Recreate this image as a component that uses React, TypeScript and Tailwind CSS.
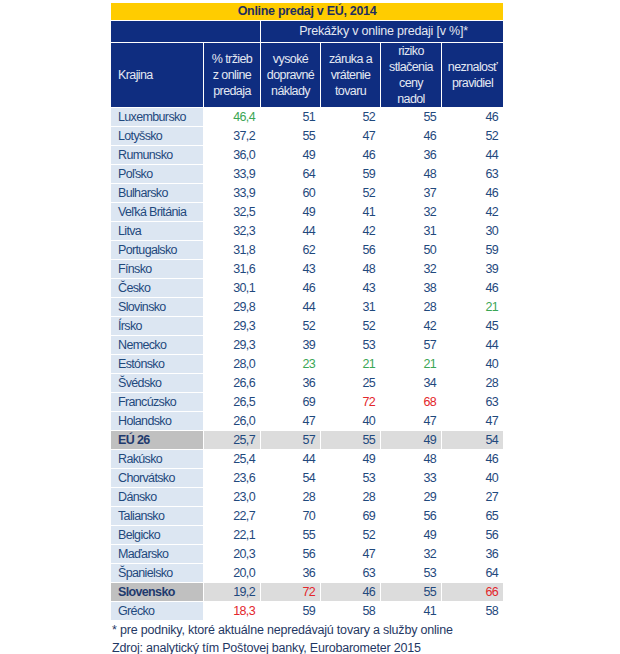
const rows: [string, string, string, string, string, string, string?][] = [
  ["Luxembursko", "46,4", "51", "52", "55", "46", "g....."],
  ["Lotyšsko", "37,2", "55", "47", "46", "52"],
  ["Rumunsko", "36,0", "49", "46", "36", "44"],
  ["Poľsko", "33,9", "64", "59", "48", "63"],
  ["Bulharsko", "33,9", "60", "52", "37", "46"],
  ["Veľká Británia", "32,5", "49", "41", "32", "42"],
  ["Litva", "32,3", "44", "42", "31", "30"],
  ["Portugalsko", "31,8", "62", "56", "50", "59"],
  ["Fínsko", "31,6", "43", "48", "32", "39"],
  ["Česko", "30,1", "46", "43", "38", "46"],
  ["Slovinsko", "29,8", "44", "31", "28", "21", "....g"],
  ["Írsko", "29,3", "52", "52", "42", "45"],
  ["Nemecko", "29,3", "39", "53", "57", "44"],
  ["Estónsko", "28,0", "23", "21", "21", "40", ".ggg."],
  ["Švédsko", "26,6", "36", "25", "34", "28"],
  ["Francúzsko", "26,5", "69", "72", "68", "63", "..rr."],
  ["Holandsko", "26,0", "47", "40", "47", "47"],
  ["EÚ 26", "25,7", "57", "55", "49", "54", "....."],
  ["Rakúsko", "25,4", "44", "49", "48", "46"],
  ["Chorvátsko", "23,6", "54", "53", "33", "40"],
  ["Dánsko", "23,0", "28", "28", "29", "27"],
  ["Taliansko", "22,7", "70", "69", "56", "65"],
  ["Belgicko", "22,1", "55", "52", "49", "56"],
  ["Maďarsko", "20,3", "56", "47", "32", "36"],
  ["Španielsko", "20,0", "36", "63", "53", "64"],
  ["Slovensko", "19,2", "72", "46", "55", "66", ".r..r"],
  ["Grécko", "18,3", "59", "58", "41", "58", "r...."],
];

const highlighted = ["EÚ 26", "Slovensko"];

function tone(flag: string | undefined, i: number) {
  const c = flag?.[i];
  if (c === "g") return "text-[#3aa655]";
  if (c === "r") return "text-[#e3262b]";
  return "text-[#1f497d]";
}

export default function App() {
  return (
    <div className="min-h-[654px] w-[620px] bg-white pl-[110px] pt-[2px] font-['Liberation_Sans',Arial,sans-serif] text-[12.5px] tracking-[-0.65px]">
      <table className="w-[393px] table-fixed border-collapse">
        <colgroup>
          <col className="w-[93px]" />
          <col className="w-[57px]" />
          <col className="w-[60px]" />
          <col className="w-[60px]" />
          <col className="w-[61px]" />
          <col className="w-[62px]" />
        </colgroup>
        <thead>
          <tr>
            <th
              colSpan={6}
              className="h-[18px] border border-white bg-[#ffcc00] p-0 text-center text-[12.5px] font-bold leading-none tracking-[-0.3px] text-[#1f2f5f]"
            >
              Online predaj v EÚ, 2014
            </th>
          </tr>
          <tr className="bg-[#0f2d80] text-[#e4e8f2]">
            <th colSpan={2} className="h-[22px] border border-white p-0" />
            <th
              colSpan={4}
              className="h-[22px] border border-white p-0 pl-[3px] text-center text-[12.5px] font-normal tracking-[-0.2px]"
            >
              Prekážky v online predaji [v %]*
            </th>
          </tr>
          <tr className="bg-[#0f2d80] text-[12.5px] leading-[16px] tracking-[-0.6px] text-[#e4e8f2]">
            <th className="h-[65px] border border-white pl-[7px] text-left font-normal">Krajina</th>
            <th className="border border-white p-0 text-center font-normal">
              % tržieb
              <br />z online
              <br />predaja
            </th>
            <th className="border border-white p-0 text-center font-normal">
              vysoké
              <br />dopravné
              <br />náklady
            </th>
            <th className="border border-white p-0 text-center font-normal">
              záruka a
              <br />vrátenie
              <br />tovaru
            </th>
            <th className="border border-white p-0 text-center font-normal">
              riziko
              <br />stlačenia
              <br />ceny
              <br />nadol
            </th>
            <th className="border border-white p-0 text-center font-normal">
              neznalosť
              <br />pravidiel
            </th>
          </tr>
        </thead>
        <tbody className="leading-none">
          {rows.map((r) => {
            const hi = highlighted.includes(r[0]);
            return (
              <tr key={r[0]} className="h-[19px]">
                <td
                  className={`border border-white pl-[7px] ${
                    hi ? "bg-[#c0c0c0] font-bold text-[#1f3a6e]" : "bg-[#dce6f2] text-[#1f497d]"
                  }`}
                >
                  {r[0]}
                </td>
                {[1, 2, 3, 4, 5].map((i) => (
                  <td
                    key={i}
                    className={`border border-white pr-[5px] text-right ${hi ? "bg-[#dcdcdc]" : "bg-white"} ${tone(r[6], i - 1)}`}
                  >
                    {r[i]}
                  </td>
                ))}
              </tr>
            );
          })}
        </tbody>
      </table>
      <div className="pl-[2px] text-[12.5px] leading-[18px] tracking-[-0.2px] text-[#1f3864]">
        <p>* pre podniky, ktoré aktuálne nepredávajú tovary a služby online</p>
        <p>Zdroj: analytický tím Poštovej banky, Eurobarometer 2015</p>
      </div>
    </div>
  );
}
